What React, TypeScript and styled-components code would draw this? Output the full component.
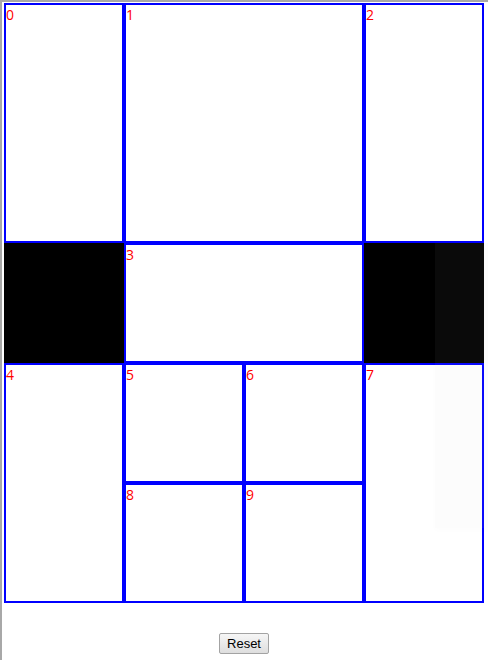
import type { FC } from 'react'
import styled, { createGlobalStyle } from 'styled-components'

/**
 * 单元格定义
 */
interface CellDef {
  label?: string
  col: string
  row: string
  dark?: boolean
}

const CELLS: CellDef[] = [
  { label: '0', col: '1', row: '1 / span 2' },
  { label: '1', col: '2 / span 2', row: '1 / span 2' },
  { label: '2', col: '4', row: '1 / span 2' },
  { col: '1', row: '3', dark: true },
  { label: '3', col: '2 / span 2', row: '3' },
  { col: '4', row: '3', dark: true },
  { label: '4', col: '1', row: '4 / span 2' },
  { label: '5', col: '2', row: '4' },
  { label: '6', col: '3', row: '4' },
  { label: '7', col: '4', row: '4 / span 2' },
  { label: '8', col: '2', row: '5' },
  { label: '9', col: '3', row: '5' },
]

const GlobalStyle = createGlobalStyle`
  html, body {
    margin: 0;
    padding: 0;
    background: #fff;
  }
`

const App: FC = () => (
  <>
    <GlobalStyle />
    <Frame>
      <Board>
        {CELLS.map((c, i) => (
          <Cell key={i} $col={c.col} $row={c.row} $dark={c.dark}>
            {c.label}
          </Cell>
        ))}
        <Veil />
      </Board>
      <Footer>
        <ResetBtn type="button">Reset</ResetBtn>
      </Footer>
    </Frame>
  </>
)

export default App

/**
 * 外框（带灰色内嵌边）
 */
const Frame = styled.div`
  height: 660px;
  box-sizing: border-box;
  border-top: 2px solid #a8a8a8;
  border-left: 2px solid #a8a8a8;
  padding: 1px 0 0 2px;
  overflow: hidden;
`

const Board = styled.div`
  position: relative;
  display: grid;
  grid-template-columns: repeat(4, 120px);
  grid-template-rows: repeat(5, 120px);
  width: 480px;
`

const Cell = styled.div<{ $col: string; $row: string; $dark?: boolean }>`
  grid-column: ${(p) => p.$col};
  grid-row: ${(p) => p.$row};
  box-sizing: border-box;
  border: ${(p) => (p.$dark ? 'none' : '2px solid #0000ff')};
  background: ${(p) => (p.$dark ? '#000' : '#fff')};
  color: #ff0000;
  font-family: 'Open Sans', 'DejaVu Sans', sans-serif;
  font-size: 14px;
  line-height: 19px;
  padding: 0;
`

const Veil = styled.div`
  position: absolute;
  left: 431px;
  top: 240px;
  width: 60px;
  height: 285px;
  background: rgba(200, 200, 200, 0.05);
  box-shadow: 0 2px 6px rgba(0, 0, 0, 0.015);
  pointer-events: none;
`

const Footer = styled.div`
  display: flex;
  justify-content: center;
  width: 480px;
  padding-top: 30px;
`

const ResetBtn = styled.button`
  font-family: 'Liberation Sans', Arial, sans-serif;
  font-size: 13px;
  color: #000;
  height: 21px;
  padding: 0 7px;
  border: 1px solid #a3a3a3;
  border-radius: 2px;
  background: linear-gradient(#f6f6f6, #dedede);
`
